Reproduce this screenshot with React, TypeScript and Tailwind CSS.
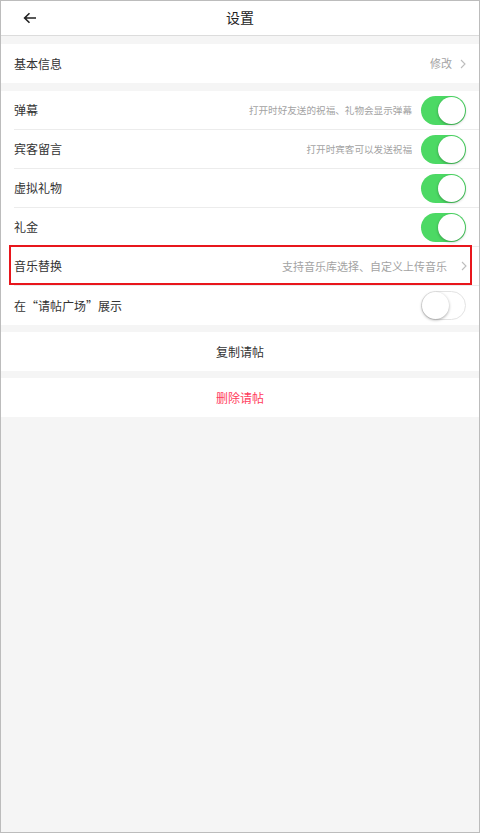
import React from 'react';

const font = { fontFamily: '"Noto Sans CJK SC", "Noto Sans", sans-serif' };

function Toggle({ on }: { on: boolean }) {
  if (on) {
    return (
      <div className="relative h-[29px] w-[45px] shrink-0 rounded-full bg-[#4cd964]">
        <div className="absolute right-[1px] top-[1px] h-[27px] w-[27px] rounded-full bg-white shadow-[0_1px_3px_rgba(0,0,0,0.3)]" />
      </div>
    );
  }
  return (
    <div className="relative h-[29px] w-[45px] shrink-0 rounded-full border border-[#e3e3e3] bg-white">
      <div className="absolute left-0 top-0 h-[27px] w-[27px] rounded-full bg-white shadow-[0_1px_3px_rgba(0,0,0,0.35)]" />
    </div>
  );
}

function Chevron() {
  return (
    <svg width="6" height="10" viewBox="0 0 6 10" className="shrink-0">
      <path d="M1 1l4 4-4 4" fill="none" stroke="#bdbdbd" strokeWidth="1.1" />
    </svg>
  );
}

function Row({
  label,
  hint,
  right,
  last,
}: {
  label: string;
  hint?: string;
  right: React.ReactNode;
  last?: boolean;
}) {
  return (
    <div className="pl-[13px]">
      <div
        className={`flex h-[39px] items-center pr-[13px] ${last ? '' : 'border-b border-[#ececec]'}`}
      >
        <span className="flex-1 text-[12px] text-[#333]">{label}</span>
        {hint && <span className="mr-[9px] text-[9.6px] text-[#a3a3a3]">{hint}</span>}
        {right}
      </div>
    </div>
  );
}

export default function App() {
  return (
    <div
      className="flex h-[833px] w-[480px] flex-col border border-[#bcbcbc] bg-[#f5f5f5]"
      style={font}
    >
      {/* 顶部导航 */}
      <div className="relative flex h-[35px] items-center justify-center border-b border-[#dcdcdc] bg-white pb-[2px]">
        <svg
          width="14"
          height="12"
          viewBox="0 0 14 12"
          className="absolute left-[22px] top-[11px]"
        >
          <path d="M13 6H2M6.5 1.2L1.6 6l4.9 4.8" fill="none" stroke="#222" strokeWidth="1.6" />
        </svg>
        <span className="text-[14px] text-[#222]">设置</span>
      </div>

      <div className="h-[8px]" />

      <div className="bg-white">
        <Row
          label="基本信息"
          last
          right={
            <div className="flex items-center gap-[8px]">
              <span className="text-[11px] text-[#a3a3a3]">修改</span>
              <Chevron />
            </div>
          }
        />
      </div>

      <div className="h-[8px]" />

      <div className="bg-white">
        <Row label="弹幕" hint="打开时好友送的祝福、礼物会显示弹幕" right={<Toggle on />} />
        <Row label="宾客留言" hint="打开时宾客可以发送祝福" right={<Toggle on />} />
        <Row label="虚拟礼物" right={<Toggle on />} />
        <Row label="礼金" right={<Toggle on />} />
        <div className="relative">
          <div className="pl-[13px]">
            <div className="flex h-[39px] items-center border-b border-[#ececec] pr-[12px]">
              <span className="flex-1 text-[12px] text-[#333]">音乐替换</span>
              <span className="mr-[14px] text-[11px] text-[#a3a3a3]">支持音乐库选择、自定义上传音乐</span>
              <Chevron />
            </div>
          </div>
          <div className="pointer-events-none absolute -top-[2px] bottom-[1px] left-[8px] right-[7px] border-2 border-[#e8161c]" />
        </div>
        <Row label="在“请帖广场”展示" last right={<Toggle on={false} />} />
      </div>

      <div className="h-[7px]" />

      <div className="flex h-[39px] items-center justify-center bg-white text-[12px] text-[#333]">
        复制请帖
      </div>

      <div className="h-[7px]" />

      <div className="flex h-[39px] items-center justify-center bg-white text-[12px] text-[#ff3b5c]">
        删除请帖
      </div>
    </div>
  );
}
